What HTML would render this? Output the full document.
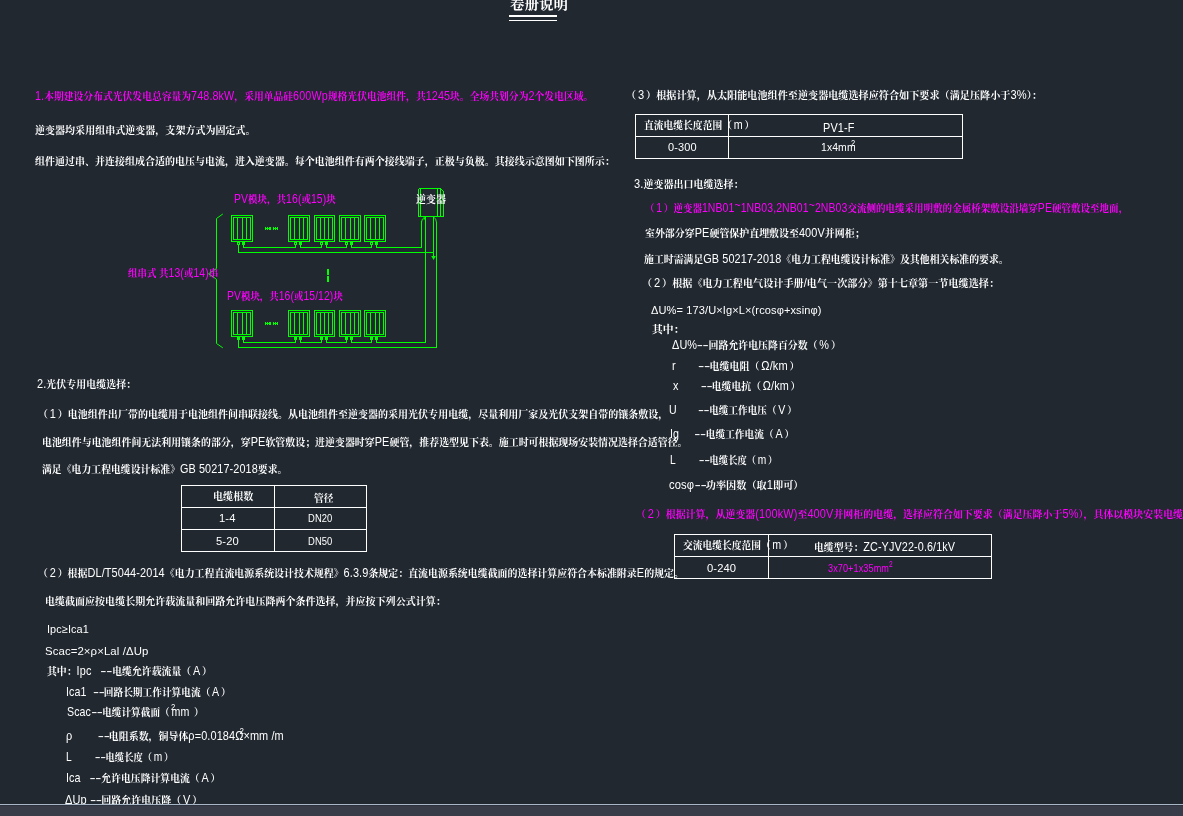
<!DOCTYPE html>
<html lang="zh-CN">
<head>
<meta charset="utf-8">
<title>卷册说明</title>
<style>
html,body{margin:0;padding:0;background:#212830;}
body{width:1183px;height:816px;overflow:hidden;position:relative;}
#cad{position:absolute;left:0;top:0;width:1183px;height:804px;overflow:hidden;will-change:transform;}
#cad svg{position:absolute;left:0;top:0;}
.t{position:absolute;white-space:pre;font-family:"Liberation Sans","Noto Serif CJK SC",sans-serif;font-size:10px;line-height:14px;height:14px;transform-origin:0 50%;font-weight:700;}
.t .a{font-weight:400;font-size:11px;letter-spacing:0.1px;display:inline-block;transform:scaleY(1.18);transform-origin:0 72%;}
.t .p{margin:0 1.8px;}
.t.lt .a{transform:scaleY(1.03);}
.t .h{display:inline-block;letter-spacing:-0.2px;transform:scaleX(1.7);transform-origin:0 50%;margin-right:4.6px;}
.t .tl{position:relative;top:-3px;}
.t sup{display:inline-block;width:0;position:relative;left:0;font-size:8px;line-height:0;vertical-align:5.5px;letter-spacing:0;}
.ttl .a{font-size:inherit;}
#bar{position:absolute;left:0;top:804px;width:1183px;height:12px;background:#373c48;}
#bar:before{content:"";position:absolute;left:0;top:0;width:100%;height:1px;background:#a8b6c6;}
#bar:after{content:"";position:absolute;left:0;top:1px;width:100%;height:1px;background:#2d333e;}

</style>
</head>
<body>
<div id="cad">
<svg width="1183" height="816" viewBox="0 0 1183 816">
<g stroke="#ffffff" fill="none" shape-rendering="crispEdges">
<line x1="509" y1="16" x2="557" y2="16" stroke-width="2"/>
<line x1="509" y1="20.5" x2="557" y2="20.5"/>
<rect x="181.5" y="485.5" width="185" height="66"/>
<line x1="274.5" y1="485.5" x2="274.5" y2="551.5"/>
<line x1="181.5" y1="507.5" x2="366.5" y2="507.5"/>
<line x1="181.5" y1="529.5" x2="366.5" y2="529.5"/>
<rect x="635.5" y="114.5" width="327" height="44"/>
<line x1="728.5" y1="114.5" x2="728.5" y2="158.5"/>
<line x1="635.5" y1="136.5" x2="962.5" y2="136.5"/>
<rect x="674.5" y="534.5" width="317" height="44"/>
<line x1="768.5" y1="534.5" x2="768.5" y2="578.5"/>
<line x1="674.5" y1="556.5" x2="991.5" y2="556.5"/>
</g>
<g stroke="#00ff00" fill="none" stroke-width="1" shape-rendering="crispEdges">
<rect x="231.5" y="215.5" width="21" height="26"/>
<rect x="233.5" y="217.5" width="17" height="22"/>
<line x1="237.5" y1="217.5" x2="237.5" y2="239.5"/>
<line x1="242.5" y1="217.5" x2="242.5" y2="239.5"/>
<line x1="246.5" y1="217.5" x2="246.5" y2="239.5"/>
<rect x="237.5" y="242.5" width="2" height="2" fill="none"/>
<rect x="242.5" y="242.5" width="2" height="2" fill="#00ff00"/>
<polyline points="243.5,244.5 243.5,247.5 295.5,247.5 295.5,244.5"/>
<rect x="288.5" y="215.5" width="21" height="26"/>
<rect x="290.5" y="217.5" width="17" height="22"/>
<line x1="294.5" y1="217.5" x2="294.5" y2="239.5"/>
<line x1="299.5" y1="217.5" x2="299.5" y2="239.5"/>
<line x1="303.5" y1="217.5" x2="303.5" y2="239.5"/>
<rect x="294.5" y="242.5" width="2" height="2" fill="none"/>
<rect x="299.5" y="242.5" width="2" height="2" fill="#00ff00"/>
<polyline points="300.5,244.5 300.5,247.5 321.5,247.5 321.5,244.5"/>
<rect x="314.5" y="215.5" width="20" height="26"/>
<rect x="316.5" y="217.5" width="16" height="22"/>
<line x1="320.5" y1="217.5" x2="320.5" y2="239.5"/>
<line x1="324.5" y1="217.5" x2="324.5" y2="239.5"/>
<line x1="328.5" y1="217.5" x2="328.5" y2="239.5"/>
<rect x="320.5" y="242.5" width="2" height="2" fill="none"/>
<rect x="325.5" y="242.5" width="2" height="2" fill="#00ff00"/>
<polyline points="326.5,244.5 326.5,247.5 346.5,247.5 346.5,244.5"/>
<rect x="339.5" y="215.5" width="21" height="26"/>
<rect x="341.5" y="217.5" width="17" height="22"/>
<line x1="345.5" y1="217.5" x2="345.5" y2="239.5"/>
<line x1="350.5" y1="217.5" x2="350.5" y2="239.5"/>
<line x1="354.5" y1="217.5" x2="354.5" y2="239.5"/>
<rect x="345.5" y="242.5" width="2" height="2" fill="none"/>
<rect x="350.5" y="242.5" width="2" height="2" fill="#00ff00"/>
<polyline points="351.5,244.5 351.5,247.5 371.5,247.5 371.5,244.5"/>
<rect x="364.5" y="215.5" width="21" height="26"/>
<rect x="366.5" y="217.5" width="17" height="22"/>
<line x1="370.5" y1="217.5" x2="370.5" y2="239.5"/>
<line x1="375.5" y1="217.5" x2="375.5" y2="239.5"/>
<line x1="379.5" y1="217.5" x2="379.5" y2="239.5"/>
<rect x="370.5" y="242.5" width="2" height="2" fill="none"/>
<rect x="375.5" y="242.5" width="2" height="2" fill="#00ff00"/>
<polyline points="376.5,244.5 376.5,247.5 421.5,247.5"/>
<polyline points="238.5,244.5 238.5,252.5 433.5,252.5"/>
<line x1="265" y1="228.5" x2="271" y2="228.5"/>
<line x1="273" y1="228.5" x2="278" y2="228.5"/>
<line x1="265.5" y1="227.0" x2="265.5" y2="230.0"/>
<line x1="267.5" y1="227.0" x2="267.5" y2="230.0"/>
<line x1="269.5" y1="227.0" x2="269.5" y2="230.0"/>
<line x1="270.5" y1="227.0" x2="270.5" y2="230.0"/>
<line x1="273.5" y1="227.0" x2="273.5" y2="230.0"/>
<line x1="275.5" y1="227.0" x2="275.5" y2="230.0"/>
<line x1="277.5" y1="227.0" x2="277.5" y2="230.0"/>
<rect x="231.5" y="310.5" width="21" height="26"/>
<rect x="233.5" y="312.5" width="17" height="22"/>
<line x1="237.5" y1="312.5" x2="237.5" y2="334.5"/>
<line x1="242.5" y1="312.5" x2="242.5" y2="334.5"/>
<line x1="246.5" y1="312.5" x2="246.5" y2="334.5"/>
<rect x="237.5" y="337.5" width="2" height="2" fill="#00ff00"/>
<rect x="242.5" y="337.5" width="2" height="2" fill="#00ff00"/>
<polyline points="243.5,339.5 243.5,342.5 295.5,342.5 295.5,339.5"/>
<rect x="288.5" y="310.5" width="21" height="26"/>
<rect x="290.5" y="312.5" width="17" height="22"/>
<line x1="294.5" y1="312.5" x2="294.5" y2="334.5"/>
<line x1="299.5" y1="312.5" x2="299.5" y2="334.5"/>
<line x1="303.5" y1="312.5" x2="303.5" y2="334.5"/>
<rect x="294.5" y="337.5" width="2" height="2" fill="#00ff00"/>
<rect x="299.5" y="337.5" width="2" height="2" fill="#00ff00"/>
<polyline points="300.5,339.5 300.5,342.5 321.5,342.5 321.5,339.5"/>
<rect x="314.5" y="310.5" width="20" height="26"/>
<rect x="316.5" y="312.5" width="16" height="22"/>
<line x1="320.5" y1="312.5" x2="320.5" y2="334.5"/>
<line x1="324.5" y1="312.5" x2="324.5" y2="334.5"/>
<line x1="328.5" y1="312.5" x2="328.5" y2="334.5"/>
<rect x="320.5" y="337.5" width="2" height="2" fill="#00ff00"/>
<rect x="325.5" y="337.5" width="2" height="2" fill="#00ff00"/>
<polyline points="326.5,339.5 326.5,342.5 346.5,342.5 346.5,339.5"/>
<rect x="339.5" y="310.5" width="21" height="26"/>
<rect x="341.5" y="312.5" width="17" height="22"/>
<line x1="345.5" y1="312.5" x2="345.5" y2="334.5"/>
<line x1="350.5" y1="312.5" x2="350.5" y2="334.5"/>
<line x1="354.5" y1="312.5" x2="354.5" y2="334.5"/>
<rect x="345.5" y="337.5" width="2" height="2" fill="#00ff00"/>
<rect x="350.5" y="337.5" width="2" height="2" fill="#00ff00"/>
<polyline points="351.5,339.5 351.5,342.5 371.5,342.5 371.5,339.5"/>
<rect x="364.5" y="310.5" width="21" height="26"/>
<rect x="366.5" y="312.5" width="17" height="22"/>
<line x1="370.5" y1="312.5" x2="370.5" y2="334.5"/>
<line x1="375.5" y1="312.5" x2="375.5" y2="334.5"/>
<line x1="379.5" y1="312.5" x2="379.5" y2="334.5"/>
<rect x="370.5" y="337.5" width="2" height="2" fill="#00ff00"/>
<rect x="375.5" y="337.5" width="2" height="2" fill="#00ff00"/>
<polyline points="376.5,339.5 376.5,342.5 425.5,342.5"/>
<polyline points="238.5,339.5 238.5,347.5 436.5,347.5"/>
<line x1="265" y1="323.5" x2="271" y2="323.5"/>
<line x1="273" y1="323.5" x2="278" y2="323.5"/>
<line x1="265.5" y1="322.0" x2="265.5" y2="325.0"/>
<line x1="267.5" y1="322.0" x2="267.5" y2="325.0"/>
<line x1="269.5" y1="322.0" x2="269.5" y2="325.0"/>
<line x1="270.5" y1="322.0" x2="270.5" y2="325.0"/>
<line x1="273.5" y1="322.0" x2="273.5" y2="325.0"/>
<line x1="275.5" y1="322.0" x2="275.5" y2="325.0"/>
<line x1="277.5" y1="322.0" x2="277.5" y2="325.0"/>
<polyline points="421.5,247.5 421.5,221"/>
<polyline points="425.5,342.5 425.5,217"/>
<polyline points="433.5,217 433.5,259"/>
<polyline points="436.5,347.5 436.5,222"/>
<line x1="328" y1="269" x2="328" y2="275" stroke-width="2"/>
<line x1="328" y1="276" x2="328" y2="282" stroke-width="2"/>
<polyline points="418.5,188.5 440.5,188.5 443.5,191.5 443.5,216.5 418.5,216.5 418.5,188.5"/>
<line x1="420.5" y1="188.5" x2="420.5" y2="216.5"/>
<line x1="437.5" y1="188.5" x2="437.5" y2="216.5"/>
<line x1="440.5" y1="188.5" x2="440.5" y2="216.5"/>
</g>
<g stroke="#00ff00" fill="none" stroke-width="1">
<polyline points="222.8,214 216.5,218.5 216.5,268.5 208.5,273.8 216.5,279.3 216.5,343.5 222.8,347.8"/>
<path d="M421.5 222 Q421.8 218.5 424.5 217.2"/>
<path d="M436.5 222.5 Q436.2 218.5 433.8 217.2"/>
<path d="M431.2 256 L433.5 260 L435.8 256 Z" fill="#00ff00" stroke="none"/>
<path d="M423.3 219.5 L424.8 216.8 L426 219.5 Z" fill="#00ff00" stroke="none"/>
</g>
</svg>
<div class="t ttl" id="t0" style="left:509.9px;top:-3.5px;color:#ffffff;font-size:14px;transform:scaleX(1.0334);">卷册说明</div>
<div class="t" id="t1" style="left:34.6px;top:88.7px;color:#ff00ff;transform:scaleX(0.9796);"><span class="a">1.</span>本期建设分布式光伏发电总容量为<span class="a">748.8kW</span>，采用单晶硅<span class="a">600Wp</span>规格光伏电池组件，共<span class="a">1245</span>块。全场共划分为<span class="a">2</span>个发电区域。</div>
<div class="t" id="t2" style="left:34.6px;top:123.8px;color:#ffffff;transform:scaleX(1.0028);">逆变器均采用组串式逆变器，支架方式为固定式。</div>
<div class="t" id="t3" style="left:34.6px;top:155.0px;color:#ffffff;transform:scaleX(0.9994);">组件通过串、并连接组成合适的电压与电流，进入逆变器。每个电池组件有两个接线端子，正极与负极。其接线示意图如下图所示：</div>
<div class="t" id="t4" style="left:233.8px;top:191.9px;color:#ff00ff;transform:scaleX(0.9491);"><span class="a">PV</span>模块，共<span class="a">16(</span>或<span class="a">15)</span>块</div>
<div class="t" id="t5" style="left:416.0px;top:192.5px;color:#ffffff;transform:scaleX(1.0000);">逆变器</div>
<div class="t" id="t6" style="left:127.6px;top:265.5px;color:#ff00ff;transform:scaleX(0.9477);">组串式 共<span class="a">13(</span>或<span class="a">14)</span>串</div>
<div class="t" id="t7" style="left:226.6px;top:288.5px;color:#ff00ff;transform:scaleX(0.9426);"><span class="a">PV</span>模块，共<span class="a">16(</span>或<span class="a">15/12)</span>块</div>
<div class="t" id="t8" style="left:36.6px;top:376.8px;color:#ffffff;transform:scaleX(0.9969);"><span class="a">2.</span>光伏专用电缆选择：</div>
<div class="t" id="t9" style="left:37.9px;top:407.2px;color:#ffffff;transform:scaleX(1.0008);">（<span class="a p">1</span>）电池组件出厂带的电缆用于电池组件间串联接线。从电池组件至逆变器的采用光伏专用电缆，尽量利用厂家及光伏支架自带的镶条敷设，</div>
<div class="t" id="t10" style="left:41.8px;top:435.0px;color:#ffffff;transform:scaleX(0.9935);">电池组件与电池组件间无法利用镶条的部分，穿<span class="a">PE</span>软管敷设；进逆变器时穿<span class="a">PE</span>硬管，推荐选型见下表。施工时可根据现场安装情况选择合适管径。</div>
<div class="t" id="t11" style="left:41.8px;top:462.2px;color:#ffffff;transform:scaleX(0.9857);">满足《电力工程电缆设计标准》<span class="a">GB 50217-2018</span>要求。</div>
<div class="t" id="t12" style="left:213.0px;top:489.5px;color:#ffffff;transform:scaleX(1.0112);">电缆根数</div>
<div class="t" id="t13" style="left:314.2px;top:491.8px;color:#ffffff;transform:scaleX(0.9721);">管径</div>
<div class="t lt" id="t14" style="left:218.7px;top:511.4px;color:#ffffff;transform:scaleX(1.0186);"><span class="a">1-4</span></div>
<div class="t lt" id="t15" style="left:308.2px;top:511.4px;color:#ffffff;transform:scaleX(0.8564);"><span class="a">DN20</span></div>
<div class="t lt" id="t16" style="left:216.0px;top:533.8px;color:#ffffff;transform:scaleX(1.0175);"><span class="a">5-20</span></div>
<div class="t lt" id="t17" style="left:308.2px;top:533.8px;color:#ffffff;transform:scaleX(0.8564);"><span class="a">DN50</span></div>
<div class="t" id="t18" style="left:37.5px;top:565.7px;color:#ffffff;transform:scaleX(0.9937);">（<span class="a p">2</span>）根据<span class="a">DL/T5044-2014</span>《电力工程直流电源系统设计技术规程》<span class="a">6.3.9</span>条规定：直流电源系统电缆截面的选择计算应符合本标准附录<span class="a">E</span>的规定。</div>
<div class="t" id="t19" style="left:45.4px;top:595.2px;color:#ffffff;transform:scaleX(1.0018);">电缆截面应按电缆长期允许载流量和回路允许电压降两个条件选择，并应按下列公式计算：</div>
<div class="t lt" id="t20" style="left:46.8px;top:622.2px;color:#ffffff;transform:scaleX(0.9891);"><span class="a">Ipc≥Ica1</span></div>
<div class="t lt" id="t21" style="left:45.4px;top:644.2px;color:#ffffff;transform:scaleX(1.0340);"><span class="a">Scac=2×ρ×Lal /ΔUp</span></div>
<div class="t" id="t22" style="left:47.1px;top:663.5px;color:#ffffff;transform:scaleX(0.9874);">其中：<span class="a">Ipc   <span class="h">--</span></span>电缆允许载流量（<span class="a p">A</span>）</div>
<div class="t" id="t23" style="left:66.4px;top:685.0px;color:#ffffff;transform:scaleX(0.9684);"><span class="a">Ica1  <span class="h">--</span></span>回路长期工作计算电流（<span class="a p">A</span>）</div>
<div class="t" id="t24" style="left:66.7px;top:704.8px;color:#ffffff;transform:scaleX(0.9654);"><span class="a">Scac<span class="h">--</span></span>电缆计算截面（<span class="a p">mm<sup style="left:-19px">2</sup> </span>）</div>
<div class="t" id="t25" style="left:66.2px;top:729.0px;color:#ffffff;transform:scaleX(0.9935);"><span class="a">ρ        <span class="h">--</span></span>电阻系数，铜导体<span class="a">ρ=0.0184Ω×mm<sup style="left:-29px">2</sup> /m</span></div>
<div class="t" id="t26" style="left:66.3px;top:749.8px;color:#ffffff;transform:scaleX(0.9288);"><span class="a">L        <span class="h">--</span></span>电缆长度（<span class="a p">m</span>）</div>
<div class="t" id="t27" style="left:65.6px;top:770.6px;color:#ffffff;transform:scaleX(0.9827);"><span class="a">Ica   <span class="h">--</span></span>允许电压降计算电流（<span class="a p">A</span>）</div>
<div class="t" id="t28" style="left:65.2px;top:793.0px;color:#ffffff;transform:scaleX(0.9986);"><span class="a">ΔUp <span class="h">--</span></span>回路允许电压降（<span class="a p">V</span>）</div>
<div class="t" id="t29" style="left:626.2px;top:88.3px;color:#ffffff;transform:scaleX(1.0122);">（<span class="a p">3</span>）根据计算，从太阳能电池组件至逆变器电缆选择应符合如下要求（满足压降小于<span class="a">3%</span>）：</div>
<div class="t" id="t30" style="left:644.1px;top:118.0px;color:#ffffff;transform:scaleX(0.9773);">直流电缆长度范围（<span class="a p">m</span>）</div>
<div class="t lt2" id="t31" style="left:823.2px;top:121.3px;color:#ffffff;transform:scaleX(0.9925);"><span class="a">PV1-F</span></div>
<div class="t lt" id="t32" style="left:668.2px;top:140.2px;color:#ffffff;transform:scaleX(0.9990);"><span class="a">0-300</span></div>
<div class="t lt" id="t33" style="left:821.2px;top:140.4px;color:#ffffff;transform:scaleX(0.9492);"><span class="a">1x4mm<sup style="left:-5px">2</sup></span></div>
<div class="t" id="t34" style="left:634.2px;top:176.5px;color:#ffffff;transform:scaleX(1.0019);"><span class="a">3.</span>逆变器出口电缆选择：</div>
<div class="t" id="t35" style="left:645.0px;top:201.4px;color:#ff00ff;transform:scaleX(0.9521);">（<span class="a p">1</span>）逆变器<span class="a">1NB01<span class="tl">~</span>1NB03,2NB01<span class="tl">~</span>2NB03</span>交流侧的电缆采用明敷的金属桥架敷设沿墙穿<span class="a">PE</span>硬管敷设至地面，</div>
<div class="t" id="t36" style="left:644.6px;top:226.4px;color:#ffffff;transform:scaleX(0.9937);">室外部分穿<span class="a">PE</span>硬管保护直埋敷设至<span class="a">400V</span>并网柜；</div>
<div class="t" id="t37" style="left:644.4px;top:251.7px;color:#ffffff;transform:scaleX(0.9884);">施工时需满足<span class="a">GB 50217-2018</span>《电力工程电缆设计标准》及其他相关标准的要求。</div>
<div class="t" id="t38" style="left:642.2px;top:276.2px;color:#ffffff;transform:scaleX(1.0115);">（<span class="a p">2</span>）根据《电力工程电气设计手册<span class="a">/</span>电气一次部分》第十七章第一节电缆选择：</div>
<div class="t lt" id="t39" style="left:651.0px;top:302.5px;color:#ffffff;transform:scaleX(1.0051);"><span class="a">ΔU%= 173/U×Ig×L×(rcosφ+xsinφ)</span></div>
<div class="t" id="t40" style="left:651.8px;top:323.2px;color:#ffffff;transform:scaleX(1.0777);">其中：</div>
<div class="t" id="t41" style="left:672.0px;top:338.2px;color:#ffffff;transform:scaleX(0.9910);"><span class="a">ΔU%<span class="h">--</span></span>回路允许电压降百分数（<span class="a p">%</span>）</div>
<div class="t" id="t42" style="left:672.2px;top:359.0px;color:#ffffff;transform:scaleX(1.0016);"><span class="a">r       <span class="h">--</span></span>电缆电阻（<span class="a p">Ω/km</span>）</div>
<div class="t" id="t43" style="left:673.2px;top:379.3px;color:#ffffff;transform:scaleX(0.9868);"><span class="a">x       <span class="h">--</span></span>电缆电抗（<span class="a p">Ω/km</span>）</div>
<div class="t" id="t44" style="left:669.1px;top:402.5px;color:#ffffff;transform:scaleX(0.9630);"><span class="a">U       <span class="h">--</span></span>电缆工作电压（<span class="a p">V</span>）</div>
<div class="t" id="t45" style="left:669.9px;top:426.6px;color:#ffffff;transform:scaleX(0.9727);"><span class="a">Ig     <span class="h">--</span></span>电缆工作电流（<span class="a p">A</span>）</div>
<div class="t" id="t46" style="left:670.3px;top:453.0px;color:#ffffff;transform:scaleX(0.9288);"><span class="a">L        <span class="h">--</span></span>电缆长度（<span class="a p">m</span>）</div>
<div class="t" id="t47" style="left:669.2px;top:478.3px;color:#ffffff;transform:scaleX(1.0159);"><span class="a">cosφ<span class="h">--</span></span>功率因数（取<span class="a">1</span>即可）</div>
<div class="t" id="t48" style="left:635.9px;top:507.0px;color:#ff00ff;transform:scaleX(0.9960);">（<span class="a p">2</span>）根据计算，从逆变器<span class="a">(100kW)</span>至<span class="a">400V</span>并网柜的电缆，选择应符合如下要求（满足压降小于<span class="a">5%</span>），具体以模块安装电缆</div>
<div class="t" id="t49" style="left:683.1px;top:538.0px;color:#ffffff;transform:scaleX(0.9735);">交流电缆长度范围（<span class="a p">m</span>）</div>
<div class="t" id="t50" style="left:813.6px;top:540.2px;color:#ffffff;transform:scaleX(0.9853);">电缆型号：<span class="a">ZC-YJV22-0.6/1kV</span></div>
<div class="t lt" id="t51" style="left:706.6px;top:560.6px;color:#ffffff;transform:scaleX(1.0199);"><span class="a">0-240</span></div>
<div class="t lt" id="t52" style="left:827.6px;top:560.6px;color:#ff00ff;transform:scaleX(0.8291);"><span class="a">3x70+1x35mm<sup>2</sup></span></div>
</div>
<div id="bar"></div>
</body>
</html>
